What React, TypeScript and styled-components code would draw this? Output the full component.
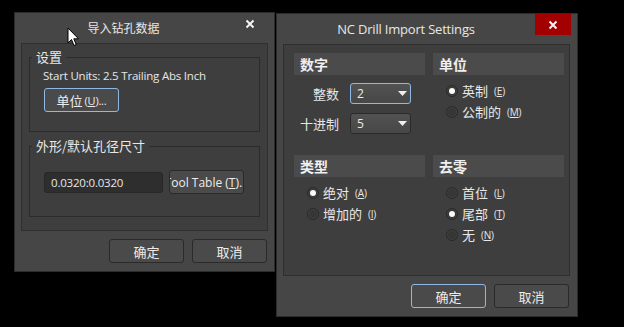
import React from "react";
import styled, { createGlobalStyle, css } from "styled-components";

const GlobalStyle = createGlobalStyle`
  html, body {
    margin: 0;
    padding: 0;
    background: #000;
  }
  body {
    font-family: "Open Sans", "Noto Sans CJK SC", sans-serif;
    color: #e4e4e4;
  }
  * {
    box-sizing: border-box;
  }
`;

const UI_FONT = `"Open Sans", "Noto Sans CJK SC", sans-serif`;
const CJK_FONT = `"Noto Sans CJK SC", "Open Sans", sans-serif`;

const Desktop = styled.div`
  position: relative;
  width: 624px;
  height: 327px;
  overflow: hidden;
  background: #000;
`;

// windows sit at their own place on the desktop
const Window = styled.div<{ $x: number; $y: number; $w: number; $h: number }>`
  position: absolute;
  left: ${(p) => p.$x}px;
  top: ${(p) => p.$y}px;
  width: ${(p) => p.$w}px;
  height: ${(p) => p.$h}px;
  display: flex;
  flex-direction: column;
  background: #464646;
  border: 1px solid #2c2c2c;
`;

const TitleBar = styled.div`
  height: 30px;
  display: flex;
  align-items: flex-start;
  flex-shrink: 0;
`;

const Title = styled.div<{ $cjk?: boolean }>`
  flex: 1;
  text-align: center;
  font-family: ${(p) => (p.$cjk ? CJK_FONT : UI_FONT)};
  font-size: ${(p) => (p.$cjk ? "12px" : "13px")};
  line-height: 30px;
  color: #e6e6e6;
  letter-spacing: ${(p) => (p.$cjk ? "0" : "-0.2px")};
`;

const CloseButton = styled.div<{ $danger?: boolean }>`
  width: 36px;
  height: 21px;
  margin-right: 6px;
  display: flex;
  align-items: center;
  justify-content: center;
  background: ${(p) => (p.$danger ? "#a20000" : "transparent")};
  svg {
    display: block;
  }
`;

const Body = styled.div<{ $pr: number }>`
  flex: 1;
  display: flex;
  flex-direction: column;
  gap: 8px;
  padding: 0 ${(p) => p.$pr}px 8px 6px;
`;

const Panel = styled.div`
  flex: 1;
  background: #3e3e3e;
  border: 1px solid #2f2f2f;
`;

const LeftPanel = styled(Panel)`
  display: flex;
  flex-direction: column;
  gap: 6px;
  padding: 5px 7px 0 7px;
`;

const Group = styled.fieldset<{ $h: number }>`
  margin: 0;
  height: ${(p) => p.$h}px;
  border: 1px solid #2b2b2b;
  padding: 0 0 0 14px;
  min-width: 0;
`;

const Legend = styled.legend`
  margin-left: -12px;
  padding: 0 4px;
  font-family: ${CJK_FONT};
  font-size: 13px;
  line-height: 16px;
  color: #e8e8e8;
`;

const InfoText = styled.div`
  margin-top: 3px;
  margin-left: -1px;
  font-size: 11.5px;
  line-height: 15px;
  letter-spacing: -0.2px;
  color: #e6e6e6;
`;

const FieldRow = styled.div`
  margin-top: 16px;
  display: flex;
  align-items: center;
  gap: 6px;
`;

const TextBox = styled.div`
  width: 119px;
  height: 21px;
  background: #2e2e2e;
  border: 1px solid #272727;
  border-radius: 3px;
  padding-left: 6px;
  display: flex;
  align-items: center;
  font-size: 11.5px;
  letter-spacing: -0.2px;
  color: #e8e8e8;
`;

const Button = styled.div<{ $focus?: boolean; $w?: number }>`
  width: ${(p) => p.$w ?? 75}px;
  height: 24px;
  display: flex;
  align-items: center;
  justify-content: center;
  white-space: nowrap;
  overflow: hidden;
  background: #4a4a4a;
  border: 1px solid #2a2a2a;
  border-radius: 3px;
  font-family: ${CJK_FONT};
  font-size: 13px;
  color: #ececec;
  ${(p) =>
    p.$focus &&
    css`
      border-color: #8fb9e4;
    `}
`;

const Mnemonic = styled.span<{ $size?: number }>`
  font-family: ${UI_FONT};
  font-size: ${(p) => p.$size ?? 10.5}px;
  margin-left: 2px;
  letter-spacing: -0.2px;
  u {
    text-underline-offset: 1px;
  }
`;

const OverflowLabel = styled.span`
  flex-shrink: 0;
  font-family: ${UI_FONT};
  font-size: 12px;
  letter-spacing: 0;
  u {
    text-underline-offset: 1px;
  }
`;

const ButtonRow = styled.div`
  display: flex;
  justify-content: flex-end;
  gap: 8px;
  padding-right: 1px;
`;

// right dialog
const RightPanel = styled(Panel)`
  display: grid;
  grid-template-columns: 131px 131px;
  grid-template-rows: 102px auto;
  column-gap: 8px;
  padding: 8px 5px 0 10px;
`;

const Section = styled.div`
  display: flex;
  flex-direction: column;
`;

const SectionHeader = styled.div`
  height: 22px;
  background: #4b4b4b;
  padding-left: 6px;
  display: flex;
  align-items: center;
  font-family: ${CJK_FONT};
  font-weight: 700;
  font-size: 14px;
  color: #f0f0f0;
`;

const SelectList = styled.div`
  padding-top: 8px;
  display: flex;
  flex-direction: column;
  gap: 9px;
`;

const SelectRow = styled.div`
  display: flex;
  align-items: center;
  gap: 11px;
`;

const SelectLabel = styled.div`
  width: 45px;
  text-align: right;
  font-family: ${CJK_FONT};
  font-size: 13px;
  color: #e6e6e6;
`;

const Select = styled.div<{ $focus?: boolean }>`
  width: 61px;
  height: 21px;
  border-radius: 3px;
  border: 1px solid ${(p) => (p.$focus ? "#8fb9e4" : "#2a2a2a")};
  background: linear-gradient(#525252, #474747);
  display: flex;
  align-items: center;
  justify-content: space-between;
  padding: 0 3px 0 6px;
  font-size: 12px;
  color: #ececec;
`;

const RadioList = styled.div`
  padding: 5px 0 0 13px;
  display: flex;
  flex-direction: column;
`;

const RadioRow = styled.div`
  height: 21px;
  display: flex;
  align-items: center;
  gap: 4px;
  font-family: ${CJK_FONT};
  font-size: 13px;
  color: #e8e8e8;
`;

const RadioDot = styled.span<{ $on?: boolean }>`
  width: 12px;
  height: 12px;
  border-radius: 50%;
  background: #363636;
  border: 1px solid #2a2a2a;
  box-shadow: inset 0 0 0 1px #444;
  display: flex;
  align-items: center;
  justify-content: center;
  flex-shrink: 0;
  &::after {
    content: "";
    width: 6px;
    height: 6px;
    border-radius: 50%;
    background: #fafafa;
    display: ${(p) => (p.$on ? "block" : "none")};
  }
`;

const Pointer = styled.svg`
  position: absolute;
  left: 67px;
  top: 27px;
`;

const CloseGlyph = () => (
  <svg width="10" height="10" viewBox="0 0 10 10">
    <path d="M1.5 1.5 L8.5 8.5 M8.5 1.5 L1.5 8.5" stroke="#f4f4f4" strokeWidth="2" />
  </svg>
);

const Caret = () => (
  <svg width="9" height="5" viewBox="0 0 9 5">
    <path d="M0 0 H9 L4.5 5 Z" fill="#f0f0f0" />
  </svg>
);

const Radio = ({ on, label, k }: { on?: boolean; label: string; k: string }) => (
  <RadioRow>
    <RadioDot $on={on} />
    <span>{label}</span>
    <Mnemonic $size={10}>
      (<u>{k}</u>)
    </Mnemonic>
  </RadioRow>
);

export default function App() {
  return (
    <Desktop>
      <GlobalStyle />

      <Window $x={14} $y={12} $w={261} $h={260}>
        <TitleBar>
          <Title $cjk>导入钻孔数据</Title>
          <CloseButton>
            <CloseGlyph />
          </CloseButton>
        </TitleBar>
        <Body $pr={6}>
          <LeftPanel>
            <Group $h={83}>
              <Legend>设置</Legend>
              <InfoText>Start Units: 2.5 Trailing Abs Inch</InfoText>
              <Button $focus $w={75} style={{ marginTop: 5 }}>
                单位
                <Mnemonic $size={11}>
                  (<u>U</u>)...
                </Mnemonic>
              </Button>
            </Group>
            <Group $h={79}>
              <Legend>外形/默认孔径尺寸</Legend>
              <FieldRow>
                <TextBox>0.0320:0.0320</TextBox>
                <Button $w={75}>
                  <OverflowLabel>
                    Tool Table (<u>T</u>)...
                  </OverflowLabel>
                </Button>
              </FieldRow>
            </Group>
          </LeftPanel>
          <ButtonRow>
            <Button>确定</Button>
            <Button>取消</Button>
          </ButtonRow>
        </Body>
      </Window>

      <Window $x={276} $y={13} $w={302} $h={304}>
        <TitleBar>
          <Title>NC Drill Import Settings</Title>
          <CloseButton $danger>
            <CloseGlyph />
          </CloseButton>
        </TitleBar>
        <Body $pr={7}>
          <RightPanel>
            <Section>
              <SectionHeader>数字</SectionHeader>
              <SelectList>
                <SelectRow>
                  <SelectLabel>整数</SelectLabel>
                  <Select $focus>
                    2
                    <Caret />
                  </Select>
                </SelectRow>
                <SelectRow>
                  <SelectLabel>十进制</SelectLabel>
                  <Select>
                    5
                    <Caret />
                  </Select>
                </SelectRow>
              </SelectList>
            </Section>
            <Section>
              <SectionHeader>单位</SectionHeader>
              <RadioList>
                <Radio on label="英制" k="E" />
                <Radio label="公制的" k="M" />
              </RadioList>
            </Section>
            <Section>
              <SectionHeader>类型</SectionHeader>
              <RadioList>
                <Radio on label="绝对" k="A" />
                <Radio label="增加的" k="I" />
              </RadioList>
            </Section>
            <Section>
              <SectionHeader>去零</SectionHeader>
              <RadioList>
                <Radio label="首位" k="L" />
                <Radio on label="尾部" k="T" />
                <Radio label="无" k="N" />
              </RadioList>
            </Section>
          </RightPanel>
          <ButtonRow>
            <Button $focus>确定</Button>
            <Button>取消</Button>
          </ButtonRow>
        </Body>
      </Window>

      <Pointer width="13" height="20" viewBox="0 0 13 20">
        <path
          d="M1 1 L1 16 L4.5 12.5 L7 18.5 L9.2 17.6 L6.8 11.8 L11.5 11.8 Z"
          fill="#fff"
          stroke="#000"
          strokeWidth="1"
          strokeLinejoin="miter"
        />
      </Pointer>
    </Desktop>
  );
}
